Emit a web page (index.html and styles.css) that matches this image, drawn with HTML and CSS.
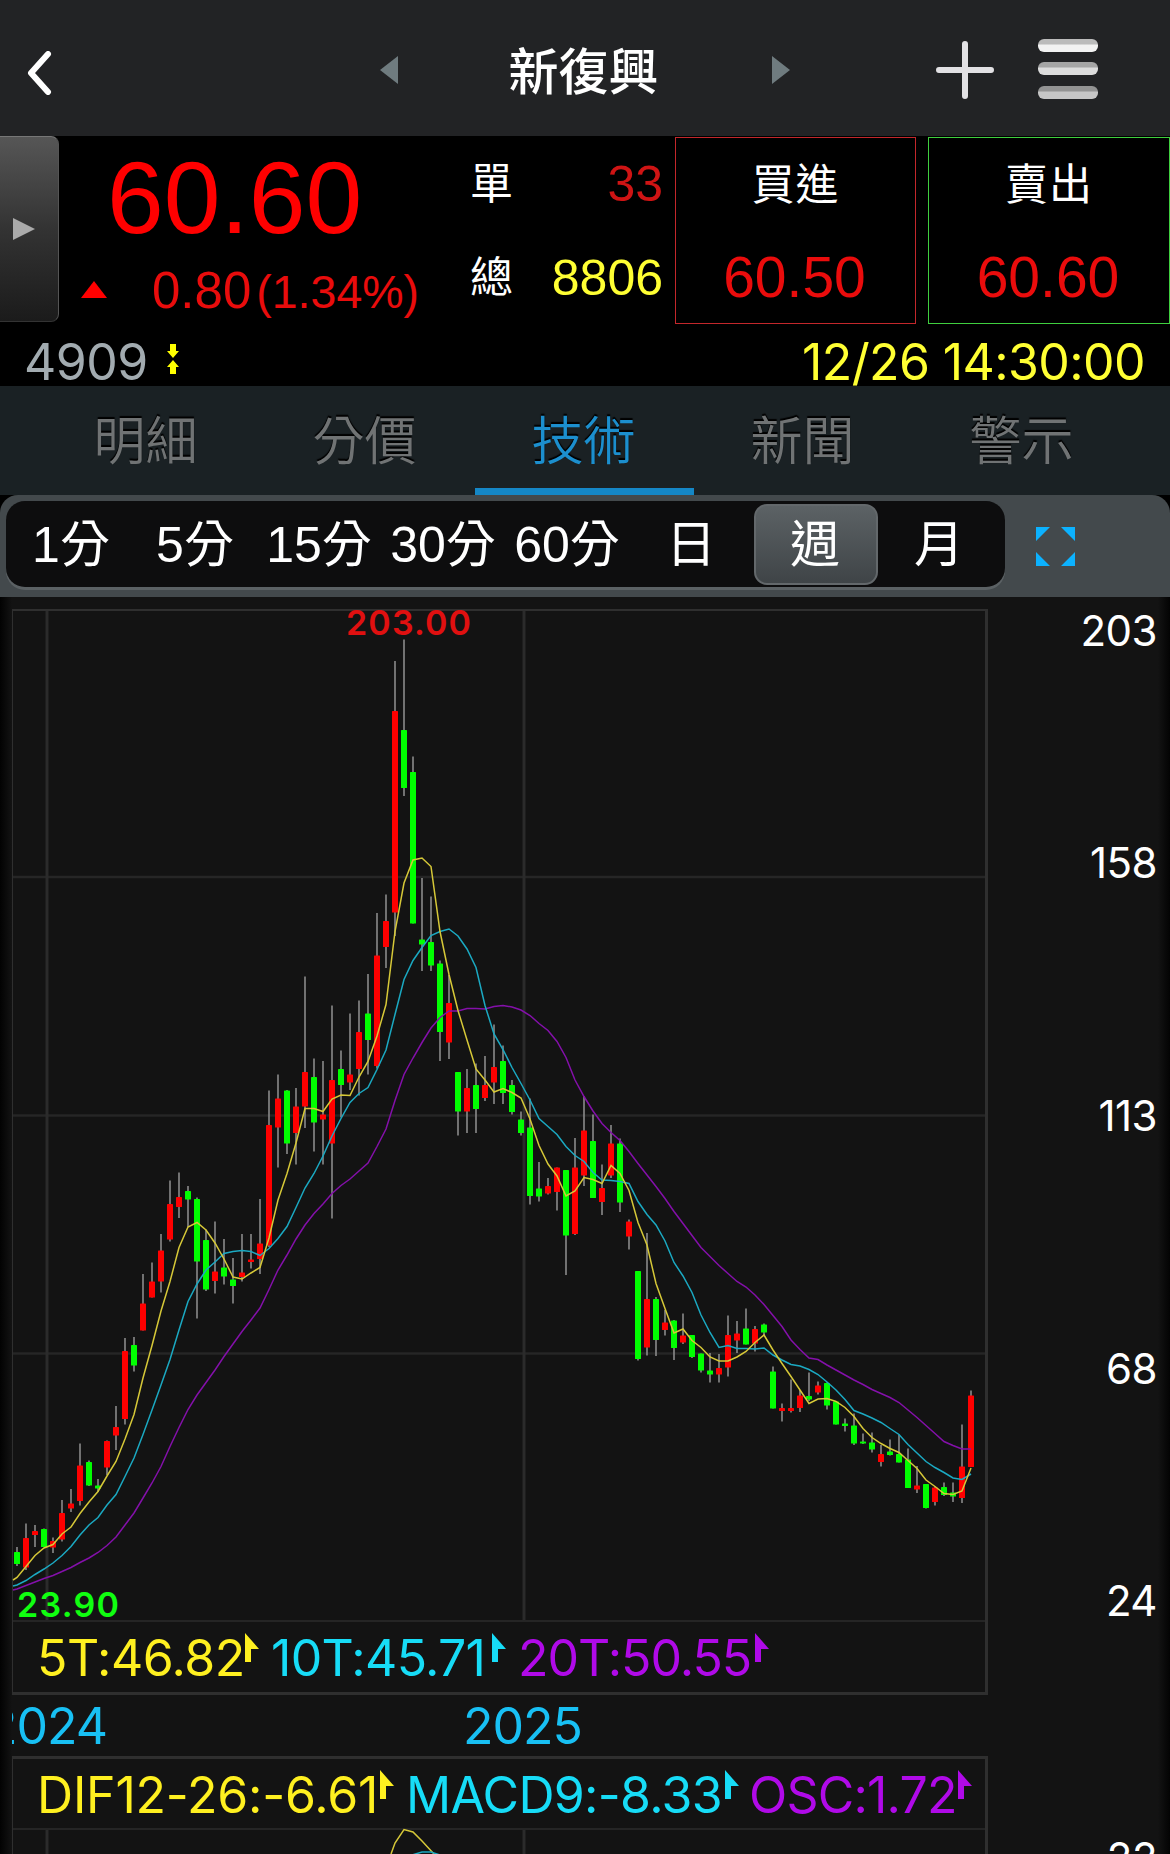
FILE: index.html
```html
<!doctype html>
<html lang="zh-Hant">
<head>
	<meta charset="utf-8">
	<title>新復興 4909</title>
	<link rel="stylesheet" href="styles.css">
</head>
<body>

	<div class="header">
		<svg class="back" viewBox="0 0 24 44"><path d="M21 3 L4 22 L21 41"/></svg>
		<div class="stockSwitch">
			<svg class="arrow" viewBox="0 0 18 28"><path d="M18 0 V28 L0 14 Z"/></svg>
			<h1>新復興</h1>
			<svg class="arrow" viewBox="0 0 18 28"><path d="M0 0 V28 L18 14 Z"/></svg>
		</div>
		<svg class="plus" viewBox="0 0 58 58"><path d="M29 3 V55 M3 29 H55"/></svg>
		<div class="menu"><i></i><i></i><i></i></div>
	</div>

	<div class="quote">
		<div class="handle"><svg viewBox="0 0 22 22"><path d="M0 0 V22 L22 11 Z"/></svg></div>
		<div class="price">
			<div class="last">60.60</div>
			<div class="change">
				<svg viewBox="0 0 26 17"><path d="M0 17 H26 L13 0 Z"/></svg>
				<span class="diff">0.80</span><span class="percent">(1.34%)</span>
			</div>
		</div>
		<div class="volume">
			<span>單</span><b class="up">33</b>
			<span>總</span><b class="yellow">8806</b>
		</div>
		<div class="deal buy"><span>買進</span><b>60.50</b></div>
		<div class="deal sell"><span>賣出</span><b>60.60</b></div>
	</div>
	<div class="codeLine">
		<span class="code">4909</span>
		<svg viewBox="0 0 12 30"><path d="M3 0 H9 V7 H12 L6 14 L0 7 H3 Z M3 30 H9 V23 H12 L6 16 L0 23 H3 Z"/></svg>
		<span class="time">12/26 14:30:00</span>
	</div>

	<div class="tabs">
		<a>明細</a>
		<a>分價</a>
		<a class="active">技術</a>
		<a>新聞</a>
		<a>警示</a>
	</div>

	<div class="rangeBar">
		<div class="ranges">
			<a>1分</a>
			<a>5分</a>
			<a>15分</a>
			<a>30分</a>
			<a>60分</a>
			<a>日</a>
			<a class="active">週</a>
			<a>月</a>
		</div>
		<svg class="expand" viewBox="0 0 39 39"><path d="M0 0 H14 L0 14 Z M39 0 H25 L39 14 Z M0 39 H14 L0 25 Z M39 39 H25 L39 25 Z"/></svg>
	</div>

	<div class="chart">
		<div class="panels">
			<div class="panel main">
				<svg id="candles" class="plot" viewBox="13 611 972 1009">
					<path class="grid" d="M13 877 H985 M13 1115.5 H985 M13 1353.5 H985"/>
					<path class="grid year" d="M47 611 V1620 M524 611 V1620"/>
				</svg>
				<div class="legend">
					<span class="ma5">5T:46.82</span><svg class="flag ma5"><use href="#flag"/></svg>
					<span class="ma10">10T:45.71</span><svg class="flag ma10"><use href="#flag"/></svg>
					<span class="ma20">20T:50.55</span><svg class="flag ma20"><use href="#flag"/></svg>
				</div>
			</div>
			<div class="years"><span>2024</span><span>2025</span></div>
			<div class="panel macd">
				<div class="legend">
					<span class="ma5">DIF12-26:-6.61</span><svg class="flag ma5"><use href="#flag"/></svg>
					<span class="ma10">MACD9:-8.33</span><svg class="flag ma10"><use href="#flag"/></svg>
					<span class="ma20">OSC:1.72</span><svg class="flag ma20"><use href="#flag"/></svg>
				</div>
				<svg class="plot" viewBox="13 1830 972 24">
					<path class="grid year" d="M47 1830 V1854 M524 1830 V1854"/>
					<path class="line ma5" d="M391 1854 L395 1843 L404 1829.5 L413 1832 L422 1841 L434 1854"/>
					<path class="line ma10" d="M412 1855 L422 1852 L431 1852 L440 1855"/>
				</svg>
			</div>
		</div>
		<div class="axis">
			<span>203</span>
			<span>158</span>
			<span>113</span>
			<span>68</span>
			<span>24</span>
			<span>22</span>
		</div>
	</div>

	<svg class="defs">
		<symbol id="flag" viewBox="0 0 14 29"><path d="M0 0 L14 16 H6 V29 H0 Z"/></symbol>
	</svg>

	<script src="chart.js"></script>
</body>
</html>
```
FILE: styles.css
```css
* {
	box-sizing: border-box;
}
body {
	margin: 0;
	width: 1170px;
	height: 1854px;
	overflow: hidden;
	background: #000;
	color: #fff;
	font-family: Inter, "Noto Sans CJK TC", sans-serif;
}
svg {
	display: block;
	flex: none;
}
.defs {
	display: none;
}

/* header */
.header {
	display: flex;
	align-items: center;
	height: 136px;
	background: #222325;
	padding: 4px 72px 0 26px;
}
.back {
	width: 26px;
	height: 44px;
	margin-top: 6px;
	fill: none;
	stroke: #fff;
	stroke-width: 6;
	stroke-linecap: round;
	stroke-linejoin: round;
}
.stockSwitch {
	display: flex;
	align-items: center;
	justify-content: space-between;
	width: 410px;
	margin-left: 328px;
}
.stockSwitch h1 {
	margin: 3px 3px 0 0;
	font-size: 50px;
	font-weight: 500;
	line-height: 60px;
}
.arrow {
	width: 18px;
	height: 28px;
	fill: #6f7b7f;
}
.plus {
	width: 58px;
	height: 58px;
	margin-left: 146px;
	fill: none;
	stroke: #e2e1e4;
	stroke-width: 6;
	stroke-linecap: round;
}
.menu {
	display: flex;
	flex-direction: column;
	gap: 10.5px;
	margin: 0 0 3px 44px;
}
.menu i {
	width: 60px;
	height: 13px;
	border-radius: 6px;
	background: linear-gradient(#bbb 35%, #f2f2f2 50%);
}
.menu i:nth-child(2) {
	background: linear-gradient(#a5a5a5 35%, #dcdcdc 50%);
}
.menu i:nth-child(3) {
	background: linear-gradient(#939393 35%, #c6c6c6 50%);
}

/* quote */
.quote {
	display: flex;
	height: 187px;
	font-family: "Liberation Sans", "Noto Sans CJK TC", sans-serif;
}
.quote b {
	font-weight: normal;
}
.handle {
	display: flex;
	align-items: center;
	width: 59px;
	height: 186px;
	padding-left: 13px;
	border: 1px solid #555;
	border-left: 0;
	border-color: #777 #555 #333 #555;
	border-radius: 0 8px 8px 0;
	background: linear-gradient(#565656, #333 50%, #1b1b1b);
}
.handle svg {
	width: 22px;
	height: 22px;
	fill: #aaa;
}
.price {
	width: 407px;
	padding: 7px 0 0 22px;
	color: #f00;
}
.last {
	padding-left: 26px;
	font-size: 102px;
	line-height: 110px;
}
.change {
	display: flex;
	align-items: baseline;
	height: 75px;
	line-height: 75px;
	color: #e90c0c;
}
.change svg {
	width: 26px;
	height: 17px;
	margin-right: 45px;
	fill: #f00;
	transform: translateY(-10px);
}
.diff {
	font-size: 51px;
}
.percent {
	margin-left: 5px;
	font-size: 46.5px;
}
.volume {
	display: grid;
	grid-template-columns: 50px 143px;
	grid-auto-rows: 94px;
	width: 209px;
	padding-top: 1px;
	padding-left: 4px;
	line-height: 95px;
	font-size: 43px;
}
.volume b {
	font-size: 50px;
	text-align: right;
}
.volume span {
	line-height: 94px;
}
.up {
	color: #cf1414;
}
.yellow {
	color: #ffff33;
}
.deal {
	width: 241px;
	height: 187px;
	border: 1px solid #c3272b;
	text-align: center;
	margin-top: 1px;
}
.deal span {
	display: block;
	font-size: 43px;
	letter-spacing: 1px;
	line-height: 94px;
}
.deal b {
	display: block;
	margin-top: -1px;
	padding-right: 2px;
	font-size: 57px;
	line-height: 92px;
	color: #ea0c0c;
}
.sell {
	width: 242px;
	margin-left: 12px;
	border-color: #3fcf3f;
}
.codeLine {
	display: flex;
	height: 63px;
	padding: 14px 25px 0 24px;
	font-size: 50px;
	line-height: 51px;
}
.code {
	color: #a2abb0;
	letter-spacing: -0.5px;
}
.codeLine svg {
	width: 12px;
	height: 30px;
	margin: 7px 0 0 19px;
	fill: #ff0;
}
.time {
	margin-left: auto;
	color: #ffff33;
	letter-spacing: -0.6px;
}

/* tabs */
.tabs {
	display: flex;
	height: 109px;
	padding-left: 37px;
	background: #1a2124;
}
.tabs a {
	width: 219px;
	padding-top: 13px;
	font-size: 52px;
	font-weight: 350;
	line-height: 86px;
	text-align: center;
	text-indent: -2px;
	color: #707374;
	text-shadow: 0 -2px 1px #000;
}
.tabs .active {
	color: #1c8fce;
	border-bottom: 7px solid #1587c6;
}
.rangeBar {
	display: flex;
	align-items: center;
	height: 102px;
	padding-left: 6px;
	border-radius: 18px 18px 0 0;
	background: #43494c;
}
.ranges {
	display: flex;
	width: 999px;
	height: 86px;
	margin-bottom: 4px;
	padding: 3px 3px 3px 4px;
	border-radius: 19px;
	background: #0d0d0e;
	box-shadow: 0 3px 0 #5b6164;
}
.ranges a {
	width: 124px;
	height: 81px;
	border-radius: 13px;
	font-family: "Liberation Sans", "Noto Sans CJK TC", sans-serif;
	font-size: 50px;
	line-height: 83px;
	text-align: center;
	text-indent: -2px;
	white-space: nowrap;
}
.ranges .active {
	border: 2px solid #63686b;
	line-height: 79px;
	background: linear-gradient(#5c6265, #3f4447);
}
.expand {
	width: 39px;
	height: 39px;
	margin-left: 31px;
	fill: #0cb2ff;
}

/* chart */
.chart {
	display: flex;
	height: 1257px;
	background: linear-gradient(90deg, #020202, #131313 12px, #131313 1158px, #030303);
}
.panels {
	width: 988px;
	padding: 12px 0 0 12px;
}
.panel {
	border: 1px solid #2f2f2f;
	border-right-width: 3px;
}
.main {
	border-top-width: 2px;
	border-bottom-width: 3px;
}
.plot {
	width: 972px;
	height: 1009px;
	overflow: visible;
}
.legend {
	display: flex;
	height: 72px;
	padding-left: 24px;
	border-top: 2px solid #252525;
	font-size: 50px;
	line-height: 73px;
	white-space: nowrap;
}
.legend span {
	flex: none;
}
.main .legend .ma5 {
	letter-spacing: -0.5px;
}
.main .legend span.ma5 {
	width: 206px;
}
.main .legend span.ma10 {
	width: 219px;
	letter-spacing: -0.7px;
}
.main .legend span.ma20 {
	width: 235px;
	letter-spacing: -1px;
}
.macd {
	border-top-width: 3px;
	border-bottom: 0;
}
.macd .plot {
	height: 24px;
}
.macd .legend {
	height: 71px;
	border-top: 0;
	border-bottom: 2px solid #252525;
	line-height: 72px;
}
.macd .legend span.ma5 {
	width: 341px;
	letter-spacing: -0.2px;
}
.macd .legend span.ma10 {
	width: 317px;
	letter-spacing: -0.7px;
}
.macd .legend span.ma20 {
	width: 207px;
	letter-spacing: -0.8px;
}
.flag {
	width: 14px;
	height: 29px;
	margin: 11px 12px 0 2px;
}
.macd .ma10 + .flag,
.macd .ma20 + .flag {
	margin-right: 10px;
}
.ma5 {
	color: #fff020;
	fill: #fff020;
}
.ma10 {
	color: #17dcf7;
	fill: #17dcf7;
}
.ma20 {
	color: #b00ae8;
	fill: #b00ae8;
}
.years {
	display: flex;
	height: 61px;
	overflow: hidden;
	font-size: 50px;
	line-height: 62px;
	letter-spacing: -1px;
	color: #18c0f4;
}
.years span {
	flex: none;
	width: 118px;
	margin-left: -25px;
}
.years span + span {
	margin-left: 358px;
}
.axis {
	display: grid;
	grid-template-rows: 232px 253px 253px 232px 257px 20px;
	flex: 1;
	padding: 9px 13px 0 0;
	overflow: hidden;
	font-size: 42px;
	line-height: 50px;
	letter-spacing: -0.5px;
	text-align: right;
}

/* drawing */
.grid {
	stroke: #262626;
	stroke-width: 2.5;
}
.year {
	stroke: #2b2b2b;
	stroke-width: 3;
}
.wick {
	stroke: #8b8b8b;
	stroke-width: 1.6;
}
.rise {
	fill: #f00;
}
.fall {
	fill: #0f0;
}
.line {
	fill: none;
	stroke-width: 1.5;
}
.line.ma5 {
	stroke: #d6c838;
}
.line.ma10 {
	stroke: #1ba9c2;
}
.line.ma20 {
	stroke: #8410aa;
}
.mark {
	font-size: 34px;
	font-weight: 600;
}
.high {
	fill: #e01010;
}
.low {
	fill: #10ff10;
}
```
FILE: chart.js
```js
// r/g, high, body top, body bottom, low
var candles = [
	["g",1547,1552,1564,1566],["r",1523.5,1538,1567.5,1570],["r",1525,1531,1535,1547],["g",1528.5,1529,1547,1547],
	["r",1537.5,1541,1547.5,1553],["r",1500,1513,1539.5,1541.5],["r",1489,1503.5,1508.5,1512],["r",1443.5,1465.5,1501,1505.5],
	["g",1460.5,1462,1485.5,1486],["g",1479,1485.5,1488.5,1492],["r",1440.5,1441,1467.5,1475],["r",1406,1427,1435.5,1450],
	["r",1338,1351,1419,1424.5],["g",1337,1345,1365.5,1371.5],["r",1274,1303.5,1330.5,1330.5],["r",1262.5,1281.5,1297.5,1297.5],
	["r",1234,1250.5,1281.5,1292.5],["r",1180.5,1204,1239.5,1241.5],["r",1172.5,1197,1207,1218],["g",1186,1191,1199.5,1227],
	["g",1197.5,1199,1261.5,1318.5],["g",1229.5,1240,1289.5,1291],["r",1221.5,1271.5,1281,1293.5],["g",1239,1267.5,1276.5,1284.5],
	["g",1258,1279.5,1286,1303.5],["r",1234,1272.5,1277,1281.5],["r",1234,1259.5,1262,1268.5],["r",1199,1243.5,1259,1274],
	["r",1090.5,1125,1245.5,1247],["r",1074.5,1098.5,1127.5,1167.5],["g",1090,1090.5,1143.5,1154],["r",1088,1106.5,1133,1164.5],
	["r",976.5,1072,1106.5,1128],["g",1058.5,1077,1122.5,1151.5],["r",1061,1114.5,1119.5,1164.5],["r",1005.5,1080,1143.5,1218.5],
	["g",1050.5,1069,1085,1117.5],["r",1013.5,1074.5,1082.5,1090],["r",1000.5,1032,1069,1095.5],["g",974,1013.5,1040,1074.5],
	["r",913,955.5,1066,1068.5],["r",894.5,921,947,968],["r",661,711,912.5,936],["g",639.5,730,788,796],
	["g",756.5,772,923.5,923.5],["g",878,939.5,944.5,971],["g",896.5,942,965.5,971],["g",960.5,963.5,1032,1061],
	["r",975,1003,1042.5,1059],["g",1072,1072,1111.5,1135.5],["r",1069,1088,1111.5,1133],["g",1063.5,1085,1109,1133],
	["r",1056,1085,1098,1101],["r",1024.5,1067,1082.5,1104],["g",1045.5,1061,1093,1104],["g",1080,1085,1112,1114.5],
	["g",1111.5,1119.5,1133,1135.5],["g",1098.5,1127.5,1196,1204.5],["g",1162,1188.5,1196.5,1201.5],["r",1178,1186,1193.5,1194.5],
	["r",1167.5,1167.5,1192,1210.5],["g",1170,1170,1235.5,1275],["r",1138,1167.5,1234,1235],["r",1096,1130.5,1175.5,1186],
	["g",1114.5,1141,1198,1198],["r",1164.5,1188,1202,1215],["r",1125,1143.5,1175.5,1178],["g",1138.5,1143.5,1202.5,1212],
	["r",1219.5,1221.5,1236.5,1249.5],["g",1271,1271,1359,1360.5],["r",1233,1299,1347.5,1355.5],["g",1297,1299,1340,1356],
	["r",1310,1322.5,1330,1335.5],["g",1320,1320.5,1348,1360],["r",1313.5,1335.5,1342.5,1344],["g",1335,1335,1357,1358],
	["g",1353.5,1353.5,1370.5,1372.5],["g",1353,1370.5,1374.5,1382.5],["r",1354,1368,1374.5,1382.5],["r",1315.5,1335,1367.5,1376.5],
	["r",1321,1333.5,1340.5,1353],["g",1308.5,1328.5,1344.5,1344.5],["r",1326,1329,1343.5,1351.5],["g",1323.5,1324.5,1332.5,1336],
	["g",1366.5,1371.5,1408.5,1408.5],["r",1403.5,1408,1411,1421.5],["r",1379.5,1408,1411,1412.5],["r",1390,1395.5,1408,1412],
	["g",1372.5,1396,1399.5,1401],["r",1381.5,1385.5,1392.5,1394.5],["g",1382.5,1383,1405.5,1409.5],["g",1401,1401.5,1424.5,1424.5],
	["g",1418.5,1423.5,1426,1431.5],["g",1413.5,1425.5,1443.5,1445],["g",1433.5,1441.5,1443.5,1444],["g",1432.5,1442.5,1449.5,1452.5],
	["r",1445,1454,1462,1466.5],["g",1439.5,1451.5,1455,1455.5],["g",1434.5,1454,1462.5,1462.5],["g",1448.5,1459.5,1488,1488],
	["r",1466,1485.5,1489.5,1493],["g",1484,1484,1508,1508.5],["r",1486.5,1487.5,1502,1505.5],["g",1482.5,1487,1495,1496],
	["g",1482.5,1492.5,1496.5,1502],["r",1424.5,1466.5,1498,1503],["r",1390.5,1395.5,1467,1467]
];

var averages = {
	ma20: [1589,1585.5,1582,1578.5,1575.5,1571.5,1567.5,1562.5,1558,1552.5,1545.5,1537,1525,1513,1498,1483,1466.5,1446.5,1427.5,1409.5,
		1395,1382.5,1370,1356.5,1344,1331.5,1320,1308,1289.5,1270,1255,1239,1225,1213.5,1204,1193.5,1185.5,1179,1171,1163,
		1146.5,1129,1100.5,1074.5,1058,1042.5,1028,1017.5,1011,1011,1008.5,1008.5,1009,1006.5,1005.5,1007,1010,1015.5,1023.5,1030.5,
		1041.5,1057.5,1080,1096.5,1111,1123.5,1132.5,1140.5,1151.5,1163.5,1175,1186.5,1198.5,1211.5,1223.5,1235.5,1247.5,1256.5,1265.5,1273.5,
		1281.5,1287,1295,1304.5,1315.5,1326.5,1340,1349.5,1358,1359.5,1365,1370,1375,1380,1384.5,1389.5,1393.5,1397.5,1402.5,1410,
		1417.5,1425.5,1433.5,1441.5,1445.5,1449,1449],
	ma10: [1585,1580.5,1574.5,1569,1563,1555.5,1546.5,1535,1525,1517.5,1505,1494.5,1476.5,1458,1434.5,1410,1385,1359.5,1330,1301.5,
		1284,1270,1262,1253.5,1251.5,1250.5,1251.5,1255.5,1248.5,1238.5,1226.5,1207.5,1188,1173.5,1156,1136,1118.5,1102.5,1093.5,1087.5,
		1069.5,1050,1014.5,979.5,960.5,947.5,935.5,931.5,929,936,949,967.5,1005.5,1034,1049.5,1067.5,1083.5,1100,1118.5,1126.5,
		1134.5,1146.5,1155.5,1161.5,1172.5,1180,1180.5,1181.5,1183.5,1201.5,1214.5,1225,1241,1262.5,1276,1292.5,1315,1332.5,1347.5,1345.5,
		1348.5,1348.5,1349,1348,1355,1360,1364.5,1366,1369.5,1374.5,1382,1390,1399.5,1410.5,1414,1418,1422.5,1428.5,1434.5,1444.5,
		1453,1461.5,1467.5,1472.5,1478,1479.5,1474],
	ma5: [1577.5,1566.5,1555.5,1548,1544.5,1534,1527,1513.5,1502,1491.5,1476,1461.5,1439,1414.5,1378,1345.5,1311,1281.5,1247.5,1227,
		1222.5,1230,1243,1259,1277,1279,1273,1267.5,1238,1200,1173.5,1143,1108.5,1108.5,1111.5,1099,1095,1095.5,1077,1061.5,
		1036,1004.5,931.5,883,860,858,866.5,931.5,974.5,1010.5,1040,1069,1080,1092,1088.5,1092.5,1098,1119,1145.5,1164,
		1176,1196,1191,1177.5,1179.5,1183.5,1165.5,1173.5,1190.5,1222.5,1245,1283.5,1308.5,1333,1329,1340.5,1347.5,1357,1361,1361,
		1357,1351.5,1342.5,1335,1350,1363.5,1376.5,1390,1403.5,1399,1398.5,1401.5,1407.5,1416.5,1428.5,1437.5,1443.5,1448.5,1452.5,1460.5,
		1468.5,1480,1486.5,1493.5,1494.5,1491,1468]
};

// where each line enters at the left edge
var lineStart = { ma5: 1580, ma10: 1586, ma20: 1590 };

var svg = document.getElementById("candles");

function add(tag, attrs, text) {
	var el = document.createElementNS("http://www.w3.org/2000/svg", tag);
	for(var key in attrs) {
		el.setAttribute(key, attrs[key]);
	}
	if(text) {
		el.textContent = text;
	}
	svg.appendChild(el);
}

function xOf(i) {
	return 17 + 9 * i;
}

for(var i = 0; i < candles.length; ++i) {
	var c = candles[i];
	add("line", { "class": "wick", x1: xOf(i), x2: xOf(i), y1: c[1], y2: c[4] });
	add("rect", { "class": c[0] == "r" ? "rise" : "fall", x: xOf(i) - 3, y: c[2], width: 6, height: c[3] - c[2], rx: 0.6 });
}

for(var name in averages) {
	var d = "M13 " + lineStart[name];
	for(var j = 0; j < averages[name].length; ++j) {
		d += " L" + xOf(j) + " " + averages[name][j];
	}
	add("path", { "class": "line " + name, d: d });
}

add("text", { "class": "mark high", x: 346, y: 635, textLength: 125 }, "203.00");
add("text", { "class": "mark low", x: 17, y: 1617, textLength: 102 }, "23.90");
```
